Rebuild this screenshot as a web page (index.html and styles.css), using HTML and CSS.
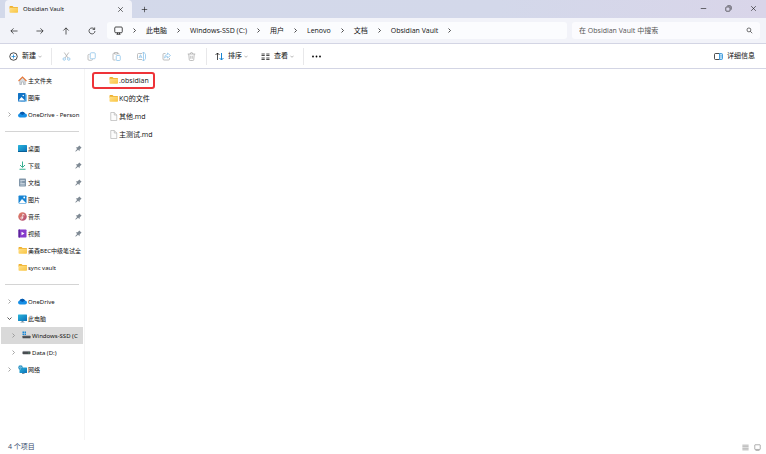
FILE: index.html
```html
<!DOCTYPE html>
<html>
<head>
    <title>Obsidian Vault</title>
    <meta http-equiv="Content-Type" content="text/html;charset=UTF-8"/>
    <link rel="stylesheet" href="styles.css">
</head>
<body>
<svg class="sprite" aria-hidden="true">
    <defs>
        <linearGradient id="gradFolder" x1="0" y1="0" x2="1" y2="1">
            <stop offset="0" stop-color="#ffe08a"/><stop offset="1" stop-color="#f9c440"/>
        </linearGradient>
        <linearGradient id="gradBlue" x1="0" y1="0" x2="1" y2="1">
            <stop offset="0" stop-color="#29b6dc"/><stop offset="1" stop-color="#0b6fb8"/>
        </linearGradient>
        <linearGradient id="gradMusic" x1="0" y1="0" x2="1" y2="1">
            <stop offset="0" stop-color="#e58463"/><stop offset="1" stop-color="#b04a78"/>
        </linearGradient>
    </defs>
    <symbol id="chevron" viewBox="0 0 10 10"><path d="M3 1l4 4-4 4" class="line"/></symbol>
    <symbol id="chevron-down" viewBox="0 0 10 10"><path d="M1 3l4 4 4-4" class="line"/></symbol>
    <symbol id="folder" viewBox="0 0 18 18">
        <path d="M1 3.500q0-1.500 1.500-1.500H7l2 2h7.500Q18 4 18 5.500v2H1z" fill="#eeb02e"/>
        <path d="M1 5.500h16q1 0 1 1V14q0 1.500-1.500 1.500h-14Q1 15.500 1 14z" fill="url(#gradFolder)"/>
    </symbol>
    <symbol id="file" viewBox="0 0 18 18">
        <path d="M3.500 1h7l5 5v11h-12z" fill="#fcfcfc" stroke="#9a9a9a"/>
        <path d="M10.500 1v5h5" fill="none" stroke="#9a9a9a"/>
    </symbol>
    <symbol id="home" viewBox="0 0 18 18">
        <path d="M3.500 8L9 3l5.500 5v9H11v-5H7v5H3.500z" fill="#d5dbe0" stroke="#8e979f"/>
        <path d="M1 10l8-8 8 8" fill="none" stroke="#e8793a" stroke-width="2.200"/>
    </symbol>
    <symbol id="picture" viewBox="0 0 18 18">
        <rect x="1" y="1" width="16" height="16" rx="1.500" fill="#1684d3"/>
        <path d="M2 16l6-8 8 8z" fill="#fff"/><circle cx="12.500" cy="5" r="1.800" fill="#fff"/>
    </symbol>
    <symbol id="gallery" viewBox="0 0 18 18">
        <path d="M5 3h13v14H5z" fill="#83c6ef"/>
        <rect x="0" y="0" width="15" height="17" rx="1" fill="#1173c5"/>
        <path d="M1 15l6-7 7 7z" fill="#fff"/><circle cx="10.500" cy="5" r="1.500" fill="#fff"/>
    </symbol>
    <symbol id="cloud" viewBox="0 0 18 18">
        <path d="M4 15a4 4 0 0 1-.8-7.900A6 6 0 0 1 14 7a4 4 0 0 1 0 8z" fill="#168ee5"/>
        <path d="M3.200 7.100A6 6 0 0 1 14 7l-5 3z" fill="#0759ad"/>
    </symbol>
    <symbol id="desktop" viewBox="0 0 18 18">
        <rect x="0" y="2" width="18" height="14" rx="1" fill="url(#gradBlue)"/>
        <path d="M0 14h18v2H0z" fill="#086098"/>
    </symbol>
    <symbol id="download" viewBox="0 0 18 18">
        <path d="M9 1v11M4 8l5 5 5-5M3 16.500h12" fill="none" stroke="#20a785" stroke-width="1.800"/>
    </symbol>
    <symbol id="document" viewBox="0 0 18 18">
        <rect x="2" y="1" width="14" height="16" rx="1.500" fill="#8297aa"/>
        <path d="M4.500 5h9M4.500 8h4M4.500 11h9M4.500 14h9" stroke="#eaf1f7" stroke-width="1.300"/>
    </symbol>
    <symbol id="music" viewBox="0 0 18 18">
        <circle cx="9" cy="9" r="8.500" fill="url(#gradMusic)"/>
        <circle cx="7.500" cy="12" r="2" fill="none" stroke="#fff" stroke-width="1.400"/>
        <path d="M9.500 12V4l3.500 2" fill="none" stroke="#fff" stroke-width="1.400"/>
    </symbol>
    <symbol id="video" viewBox="0 0 18 18">
        <rect x="1" y="1" width="16" height="16" rx="1.500" fill="#873bcb"/>
        <path d="M1 1h3v16H1z" fill="#5c259a"/><path d="M7 5.500v7l6-3.500z" fill="#fff"/>
    </symbol>
    <symbol id="pc" viewBox="0 0 18 18">
        <rect x="0" y="1" width="18" height="13" rx="1" fill="url(#gradBlue)"/>
        <path d="M7 14h4v2h2v1H5v-1h2z" fill="#7e929f"/>
    </symbol>
    <symbol id="drive-win" viewBox="0 0 18 18">
        <path d="M1 1h3v3H1zM5 1h3v3H5zM1 5h3v3H1zM5 5h3v3H5z" fill="#1787d8"/>
        <rect x="1" y="9.500" width="16" height="5" rx="1" fill="#484c50"/><path d="M2 9.500h14" stroke="#a7adb2"/>
    </symbol>
    <symbol id="drive" viewBox="0 0 18 18">
        <rect x="1" y="6.500" width="16" height="6" rx="1.500" fill="#484c50"/>
        <path d="M2 6.500h14" stroke="#a7adb2"/><path d="M12 10h3" stroke="#57c784"/>
    </symbol>
    <symbol id="network" viewBox="0 0 18 18">
        <rect x="3" y="5" width="15" height="11" rx="1" fill="url(#gradBlue)"/>
        <path d="M8 16h5v2H8z" fill="#7e929f"/>
        <circle cx="5" cy="5" r="4.500" fill="#2089bd"/>
        <path d="M1 5h8M5 1q-3 4 0 8M5 1q3 4 0 8" fill="none" stroke="#a5e0f5" stroke-width=".8"/>
    </symbol>
    <symbol id="pin" viewBox="0 0 18 18">
        <path d="M11 1l6 6-2 1.500-3 3-.5 4.500L8 12.500 2.500 17 1 17 1 15.500 5.500 10 2 6.500 6.500 6l3-3z" fill="#7f8a94"/>
    </symbol>
    <symbol id="close" viewBox="0 0 18 18"><path d="M3 3l12 12M15 3L3 15" class="line"/></symbol>
    <symbol id="plus" viewBox="0 0 18 18"><path d="M9 2v14M2 9h14" class="line"/></symbol>
    <symbol id="arrow" viewBox="0 0 18 18"><path d="M17 9H2M8 3L2 9l6 6" class="line"/></symbol>
    <symbol id="arrow-right" viewBox="0 0 18 18"><path d="M1 9h15M10 3l6 6-6 6" class="line"/></symbol>
    <symbol id="arrow-up" viewBox="0 0 18 18"><path d="M9 17V2M3 8l6-6 6 6" class="line"/></symbol>
    <symbol id="refresh" viewBox="0 0 18 18"><path d="M14.500 5A6.700 6.700 0 1 0 15.700 9M15 1v4.500h-4.500" class="line"/></symbol>
    <symbol id="monitor" viewBox="0 0 18 18"><rect x="1.500" y="2" width="15" height="11.500" rx="2" class="line"/><path d="M7 13.500v3M11 13.500v3M5 16.500h8" class="line"/></symbol>
    <symbol id="search" viewBox="0 0 18 18"><circle cx="7.500" cy="7.500" r="5" class="line"/><path d="M11 11l5 5" class="line"/></symbol>
    <symbol id="new" viewBox="0 0 18 18"><circle cx="9" cy="9" r="7.500" class="line"/><path d="M9 5v8M5 9h8" class="line blue"/></symbol>
    <symbol id="cut" viewBox="0 0 18 18"><path d="M4.500 1l7.500 11M13.500 1L6 12" class="line"/><circle cx="4.500" cy="14" r="2.500" class="line blue"/><circle cx="13.500" cy="14" r="2.500" class="line blue"/></symbol>
    <symbol id="copy" viewBox="0 0 18 18"><path d="M5 5H3.500Q2 5 2 6.500v8Q2 16.500 4 16.500h5q2 0 2-2" class="line"/><rect x="6.500" y="1.500" width="10" height="12" rx="2" class="line blue"/></symbol>
    <symbol id="paste" viewBox="0 0 18 18"><path d="M7 16H3.500Q2 16 2 14.500V4q0-1.500 1.500-1.500H5M11 2.500h1.500Q14 2.500 14 4v1M5 1h6v3H5z" class="line"/><rect x="8.500" y="7" width="8" height="10" rx="1.500" class="line blue"/></symbol>
    <symbol id="rename" viewBox="0 0 18 18"><path d="M10.500 3H3Q1 3 1 5v8q0 2 2 2h7.500" class="line"/><path d="M4 12l3-6.500L10 12M5 10h4M11 1h4M13 1v16M11 17h4M15 3q2 0 2 2v8q0 2-2 2" class="line blue"/></symbol>
    <symbol id="share" viewBox="0 0 18 18"><path d="M7 3H4Q2 3 2 5v9q0 2 2 2h9q2 0 2-2v-2" class="line"/><path d="M11 2l6 5-6 5V9q-4 0-6 3 0-7 6-7z" class="line blue"/></symbol>
    <symbol id="trash" viewBox="0 0 18 18"><path d="M1.500 4h15M6.500 4q0-3 2.500-3t2.500 3M3.500 4l1 11q0 2 2 2h5q2 0 2-2l1-11M7.500 7.500v6M10.500 7.500v6" class="line"/></symbol>
    <symbol id="sort" viewBox="0 0 18 18"><path d="M5 16V2M1 6l4-4 4 4" class="line"/><path d="M13 2v14M9 12l4 4 4-4" class="line blue thick"/></symbol>
    <symbol id="view" viewBox="0 0 18 18"><path d="M1 4h6.500M1 7h6.500M1 12h6.500M1 15h6.500M10.500 4H17M10.500 7H17M10.500 12H17M10.500 15H17" class="line"/></symbol>
    <symbol id="more" viewBox="0 0 18 18"><circle cx="2" cy="9" r="1.800"/><circle cx="9" cy="9" r="1.800"/><circle cx="16" cy="9" r="1.800"/></symbol>
    <symbol id="details" viewBox="0 0 18 18"><path d="M11 3H3Q1 3 1 5v8q0 2 2 2h8" class="line"/><path d="M11 3h4q2 0 2 2v8q0 2-2 2h-4z" fill="#b9def7" stroke="#1684d3" stroke-width="1.500"/><path d="M13 7h2M13 10h2" stroke="#1684d3"/></symbol>
    <symbol id="minimize" viewBox="0 0 18 18"><path d="M2 9h14" class="line"/></symbol>
    <symbol id="restore" viewBox="0 0 18 18"><rect x="2" y="5" width="11" height="11" rx="2" class="line"/><path d="M6 2h7q3 0 3 3v7" class="line"/></symbol>
    <symbol id="list" viewBox="0 0 18 18"><path d="M1 3h16M1 7h16M1 11h16M1 15h16" class="line"/></symbol>
    <symbol id="tile" viewBox="0 0 18 18"><rect x="2" y="2" width="14" height="12" rx="1" class="line"/><path d="M4 17h10" class="line"/></symbol>
</svg>
<div class="window">
    <header class="titlebar">
        <div class="tab">
            <svg class="icon"><use href="#folder"/></svg>
            <span class="tab-name">Obsidian Vault</span>
            <button class="icon-btn" aria-label="关闭标签页"><svg class="small"><use href="#close"/></svg></button>
        </div>
        <button class="icon-btn new-tab" aria-label="新标签页"><svg class="small"><use href="#plus"/></svg></button>
        <div class="window-buttons">
            <button class="icon-btn" aria-label="最小化"><svg class="small"><use href="#minimize"/></svg></button>
            <button class="icon-btn" aria-label="还原"><svg class="small"><use href="#restore"/></svg></button>
            <button class="icon-btn" aria-label="关闭"><svg class="small"><use href="#close"/></svg></button>
        </div>
    </header>
    <div class="navbar">
        <div class="nav-buttons">
            <button class="icon-btn" aria-label="后退"><svg class="nav-icon"><use href="#arrow"/></svg></button>
            <button class="icon-btn" aria-label="前进"><svg class="nav-icon"><use href="#arrow-right"/></svg></button>
            <button class="icon-btn" aria-label="向上"><svg class="nav-icon"><use href="#arrow-up"/></svg></button>
            <button class="icon-btn" aria-label="刷新"><svg class="nav-icon"><use href="#refresh"/></svg></button>
        </div>
        <nav class="address">
            <svg class="icon"><use href="#monitor"/></svg>
            <svg class="chev"><use href="#chevron"/></svg>
            <a href="#">此电脑</a>
            <svg class="chev"><use href="#chevron"/></svg>
            <a href="#">Windows-SSD (C:)</a>
            <svg class="chev"><use href="#chevron"/></svg>
            <a href="#">用户</a>
            <svg class="chev"><use href="#chevron"/></svg>
            <a href="#">Lenovo</a>
            <svg class="chev"><use href="#chevron"/></svg>
            <a href="#">文档</a>
            <svg class="chev"><use href="#chevron"/></svg>
            <a href="#">Obsidian Vault</a>
            <svg class="chev"><use href="#chevron"/></svg>
        </nav>
        <label class="search">
            <input type="text" placeholder="在 Obsidian Vault 中搜索" aria-label="搜索">
            <svg class="small"><use href="#search"/></svg>
        </label>
    </div>
    <div class="toolbar">
        <div class="tools">
            <button class="tool"><svg class="icon"><use href="#new"/></svg>新建<svg class="chev"><use href="#chevron-down"/></svg></button>
        </div>
        <div class="tool-group">
            <button class="icon-btn" disabled aria-label="剪切"><svg class="icon"><use href="#cut"/></svg></button>
            <button class="icon-btn" disabled aria-label="复制"><svg class="icon"><use href="#copy"/></svg></button>
            <button class="icon-btn" disabled aria-label="粘贴"><svg class="icon"><use href="#paste"/></svg></button>
            <button class="icon-btn" disabled aria-label="重命名"><svg class="icon"><use href="#rename"/></svg></button>
            <button class="icon-btn" disabled aria-label="共享"><svg class="icon"><use href="#share"/></svg></button>
            <button class="icon-btn" disabled aria-label="删除"><svg class="icon"><use href="#trash"/></svg></button>
        </div>
        <div class="tools">
            <button class="tool"><svg class="icon"><use href="#sort"/></svg>排序<svg class="chev"><use href="#chevron-down"/></svg></button>
            <button class="tool"><svg class="icon"><use href="#view"/></svg>查看<svg class="chev"><use href="#chevron-down"/></svg></button>
        </div>
        <div class="tool-more">
            <button class="icon-btn" aria-label="查看更多"><svg class="icon"><use href="#more"/></svg></button>
        </div>
        <button class="tool tool-details"><svg class="icon"><use href="#details"/></svg>详细信息</button>
    </div>
    <div class="content">
        <nav class="sidebar">
            <a class="row" href="#"><svg class="icon"><use href="#home"/></svg><span>主文件夹</span></a>
            <a class="row" href="#"><svg class="icon"><use href="#gallery"/></svg><span>图库</span></a>
            <a class="row" href="#"><svg class="chev"><use href="#chevron"/></svg><svg class="icon"><use href="#cloud"/></svg><span>OneDrive - Person</span></a>
            <hr>
            <a class="row" href="#"><svg class="icon"><use href="#desktop"/></svg><span>桌面</span><svg class="pin"><use href="#pin"/></svg></a>
            <a class="row" href="#"><svg class="icon"><use href="#download"/></svg><span>下载</span><svg class="pin"><use href="#pin"/></svg></a>
            <a class="row" href="#"><svg class="icon"><use href="#document"/></svg><span>文档</span><svg class="pin"><use href="#pin"/></svg></a>
            <a class="row" href="#"><svg class="icon"><use href="#picture"/></svg><span>图片</span><svg class="pin"><use href="#pin"/></svg></a>
            <a class="row" href="#"><svg class="icon"><use href="#music"/></svg><span>音乐</span><svg class="pin"><use href="#pin"/></svg></a>
            <a class="row" href="#"><svg class="icon"><use href="#video"/></svg><span>视频</span><svg class="pin"><use href="#pin"/></svg></a>
            <a class="row" href="#"><svg class="icon"><use href="#folder"/></svg><span>美森BEC中级笔试全</span></a>
            <a class="row" href="#"><svg class="icon"><use href="#folder"/></svg><span>sync vault</span></a>
            <hr>
            <a class="row" href="#"><svg class="chev"><use href="#chevron"/></svg><svg class="icon"><use href="#cloud"/></svg><span>OneDrive</span></a>
            <a class="row open" href="#"><svg class="chev"><use href="#chevron-down"/></svg><svg class="icon"><use href="#pc"/></svg><span>此电脑</span></a>
            <a class="row child selected" href="#"><svg class="chev"><use href="#chevron"/></svg><svg class="icon"><use href="#drive-win"/></svg><span>Windows-SSD (C</span></a>
            <a class="row child" href="#"><svg class="chev"><use href="#chevron"/></svg><svg class="icon"><use href="#drive"/></svg><span>Data (D:)</span></a>
            <a class="row" href="#"><svg class="chev"><use href="#chevron"/></svg><svg class="icon"><use href="#network"/></svg><span>网络</span></a>
        </nav>
        <main class="files">
            <a class="file marked" href="#"><svg class="icon"><use href="#folder"/></svg>.obsidian</a>
            <a class="file" href="#"><svg class="icon"><use href="#folder"/></svg>KQ的文件</a>
            <a class="file" href="#"><svg class="icon"><use href="#file"/></svg>其他.md</a>
            <a class="file" href="#"><svg class="icon"><use href="#file"/></svg>主测试.md</a>
        </main>
    </div>
    <footer class="statusbar">
        <span class="count">4 个项目</span>
        <button class="icon-btn" aria-label="详细列表"><svg class="small"><use href="#list"/></svg></button>
        <button class="icon-btn" aria-label="大缩略图"><svg class="small"><use href="#tile"/></svg></button>
    </footer>
</div>
</body>
</html>
```
FILE: styles.css
```css
* {
    box-sizing: border-box;
}

body {
    margin: 0;
    font-family: "Open Sans", "Noto Sans CJK SC", sans-serif;
    font-size: 7px;
    line-height: 10px;
    color: #111;
    background: #fff;
}

a {
    color: inherit;
    text-decoration: none;
}

button {
    font: inherit;
    color: inherit;
    border: none;
    padding: 0;
    background: none;
}

svg {
    display: block;
    flex: none;
}

.sprite {
    position: absolute;
    width: 0;
    height: 0;
}

.line {
    fill: none;
    stroke: currentColor;
    stroke-width: 1.5;
}

.blue {
    stroke: #1684d3;
}

.thick {
    stroke-width: 2;
}

.icon {
    width: 9px;
    height: 9px;
}

.nav-icon {
    width: 8px;
    height: 8px;
}

.small {
    width: 7px;
    height: 7px;
}

.chev {
    width: 5px;
    height: 5px;
}

.icon-btn {
    display: flex;
    align-items: center;
    justify-content: center;
}

.window {
    display: flex;
    flex-direction: column;
    min-height: 100vh;
}

/* title bar */
.titlebar {
    display: flex;
    height: 18px;
    background: linear-gradient(90deg, #d3d9ea, #d3d8ea 65%, #d9d5e9);
}

.tab {
    display: flex;
    align-items: center;
    width: 127px;
    margin-left: 5px;
    padding: 0 8px 0 4px;
    background: #f2f3f9;
    border-radius: 4px 4px 0 0;
}

.tab-name {
    flex: 1;
    margin-left: 5px;
    font-family: "Noto Sans", sans-serif;
    font-size: 6px;
}

.new-tab {
    width: 24px;
}

.window-buttons {
    display: flex;
    margin-left: auto;
}

.window-buttons .icon-btn {
    width: 25px;
    height: 16px;
}

/* navigation bar */
.navbar {
    display: flex;
    align-items: center;
    height: 26px;
    padding-right: 6px;
    background: #f2f3f9;
    border-bottom: 1px solid #d3d5e4;
}

.nav-buttons {
    display: flex;
    width: 107px;
    padding-left: 1px;
}

.nav-buttons .icon-btn {
    width: 26px;
    height: 18px;
}

.address {
    display: flex;
    flex: 1;
    align-items: center;
    gap: 9px;
    height: 17px;
    margin-right: 5px;
    padding-left: 7px;
    background: #fbfcfe;
    border-radius: 3px;
}

.search {
    display: flex;
    align-items: center;
    width: 188px;
    height: 17px;
    padding: 0 7px;
    background: #fbfbfe;
    border-radius: 3px;
}

.search input {
    flex: 1;
    min-width: 0;
    padding: 0;
    border: none;
    outline: none;
    background: none;
    font: inherit;
}

.search input::placeholder {
    color: #555;
}

/* toolbar */
.toolbar {
    display: flex;
    align-items: center;
    height: 25px;
    padding: 0 11px 0 9px;
    border-bottom: 1px solid #d3d5e4;
}

.tools {
    display: flex;
    gap: 13px;
    margin-right: 9px;
}

.tool {
    display: flex;
    align-items: center;
    gap: 4px;
}

.tool .chev {
    width: 4px;
    margin-left: -2px;
    color: #888;
}

.tool-group {
    display: flex;
    margin-right: 8px;
    padding: 0 2px;
    border-left: 1px solid #e8e8ea;
    border-right: 1px solid #e8e8ea;
}

.tool-group .icon-btn {
    width: 25px;
    height: 17px;
    color: #555;
    opacity: .5;
}

.tool-more {
    padding-left: 8px;
    border-left: 1px solid #e8e8ea;
}

.tool-more .icon-btn {
    height: 17px;
}

.tool-details {
    margin-left: auto;
}

/* content */
.content {
    display: flex;
    flex: 1;
}

.sidebar {
    width: 85px;
    padding: 3px 1px 0;
    border-right: 1px solid #f4f4f4;
    font-family: "Noto Sans", "Noto Sans CJK SC", sans-serif;
    font-size: 6px;
}

.row {
    display: flex;
    align-items: center;
    height: 17px;
    padding-left: 17px;
    overflow: hidden;
    white-space: nowrap;
}

.row span {
    margin-left: 1px;
}

.row .chev {
    margin: 0 6px 0 -11px;
    color: #888;
}

.row.open .chev {
    color: #222;
}

.row.child {
    padding-left: 21px;
}

.row.selected {
    background: #d9d9d9;
}

.pin {
    width: 7px;
    height: 7px;
    margin: 0 1px 0 auto;
}

.sidebar hr {
    height: 1px;
    margin: 8px 4px;
    border: none;
    background: #d4d4d4;
}

.files {
    display: flex;
    flex: 1;
    flex-direction: column;
    align-items: flex-start;
    gap: 1px;
    padding: 3px 7px;
}

.file {
    display: flex;
    align-items: center;
    gap: 1px;
    height: 17px;
    padding: 0 4px 0 17px;
}

.marked {
    padding-left: 15px;
    border: 2px solid #ee3338;
    border-radius: 3px;
}

/* status bar */
.statusbar {
    display: flex;
    align-items: center;
    gap: 5px;
    height: 14px;
    padding: 0 5px 0 8px;
    color: #777;
}

.count {
    margin-right: auto;
    color: #34496b;
}
```
